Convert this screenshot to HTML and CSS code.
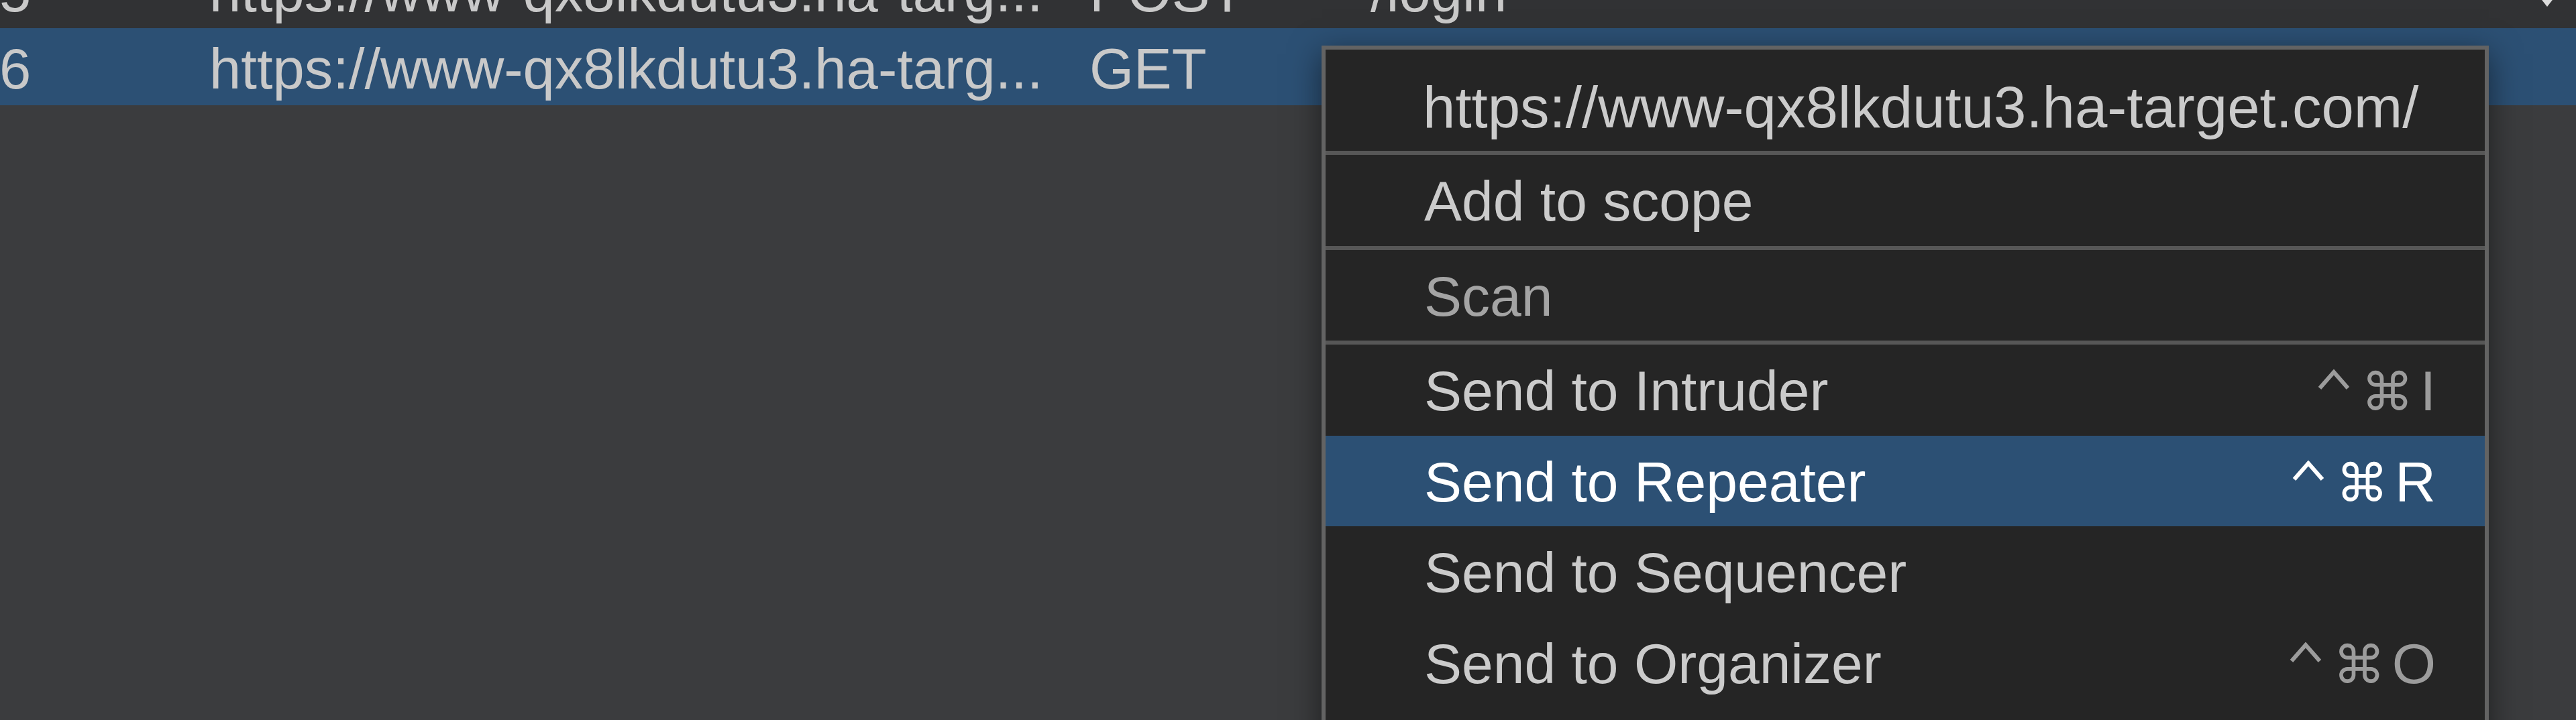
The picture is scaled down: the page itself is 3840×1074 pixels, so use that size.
FILE: index.html
```html
<!DOCTYPE html>
<html>
<head>
<meta charset="utf-8">
<link rel="stylesheet" href="styles.css">
</head>
<body>
<div class="screen">
  <div class="table">
    <div class="row">
      <span class="c-num">5</span>
      <span class="c-url">https://www-qx8lkdutu3.ha-targ...</span>
      <span class="c-method">POST</span>
      <span class="c-path">/login</span>
      <span class="c-sort"><span class="sort-arrow"></span></span>
    </div>
    <div class="row selected">
      <span class="c-num">6</span>
      <span class="c-url">https://www-qx8lkdutu3.ha-targ...</span>
      <span class="c-method">GET</span>
      <span class="c-path"></span>
      <span class="c-sort"></span>
    </div>
  </div>

  <div class="menu">
    <div class="item header">https://www-qx8lkdutu3.ha-target.com/</div>
    <div class="sep"></div>
    <div class="item">Add to scope</div>
    <div class="sep"></div>
    <div class="item disabled">Scan</div>
    <div class="sep"></div>
    <div class="item"><span>Send to Intruder</span><span class="shortcut"><svg class="k-ctrl" width="48" height="31" viewBox="0 0 48 31" aria-label="Control"><polyline points="3,28 24,4 45,28" fill="none" stroke="currentColor" stroke-width="6"/></svg><span class="k-cmd">⌘</span><span class="k-key">I</span></span></div>
    <div class="item active"><span>Send to Repeater</span><span class="shortcut"><svg class="k-ctrl" width="48" height="31" viewBox="0 0 48 31" aria-label="Control"><polyline points="3,28 24,4 45,28" fill="none" stroke="currentColor" stroke-width="6"/></svg><span class="k-cmd">⌘</span><span class="k-key">R</span></span></div>
    <div class="item"><span>Send to Sequencer</span></div>
    <div class="item"><span>Send to Organizer</span><span class="shortcut"><svg class="k-ctrl" width="48" height="31" viewBox="0 0 48 31" aria-label="Control"><polyline points="3,28 24,4 45,28" fill="none" stroke="currentColor" stroke-width="6"/></svg><span class="k-cmd">⌘</span><span class="k-key">O</span></span></div>
  </div>
</div>
</body>
</html>
```

FILE: styles.css
```css
html, body {
  margin: 0;
  padding: 0;
}
body {
  width: 3840px;
  height: 1074px;
  overflow: hidden;
  background: #3b3c3e;
  font-family: "Liberation Sans", Arial, sans-serif;
}
.screen {
  position: relative;
  display: flow-root;
  width: 3840px;
  height: 1074px;
}
.table {
  margin-top: -73px;
  font-size: 85px;
  color: #c9c9c9;
}
.row {
  display: grid;
  grid-template-columns: 313px 1312px 419px 1fr auto;
  height: 115px;
  box-sizing: border-box;
  padding-top: 6px;
  line-height: 109px;
  background: #313234;
  margin-left: -1px;
  white-space: nowrap;
}
.row.selected {
  background: #2c5074;
}
.c-sort {
  display: flex;
  align-items: flex-start;
  padding-right: 32px;
}
.sort-arrow {
  margin-top: 63px;
  width: 0;
  height: 0;
  border-left: 11px solid transparent;
  border-right: 11px solid transparent;
  border-top: 14px solid #dcdcdc;
}
.menu {
  position: absolute;
  left: 1970px;
  top: 68px;
  width: 1740px;
  box-sizing: border-box;
  border: 6px solid #636363;
  border-bottom: none;
  padding-bottom: 60px;
  background: #252525;
  box-shadow: 0 12px 44px rgba(0, 0, 0, 0.5);
  font-size: 84px;
  color: #cbcbcb;
}
.item {
  display: flex;
  justify-content: space-between;
  height: 135.5px;
  box-sizing: border-box;
  padding: 4px 73px 0 147px;
  line-height: 131.5px;
  white-space: nowrap;
}
.item.header {
  height: 151px;
  padding: 21px 73px 0 145px;
  line-height: 130px;
  font-size: 87px;
}
.item.disabled {
  color: #a4a4a4;
}
.item.active {
  background: #2c5074;
  color: #ffffff;
}
.sep {
  height: 6px;
  background: #575757;
}
.shortcut {
  display: block;
  color: #9c9c9c;
}
.active .shortcut {
  color: #ffffff;
}
.k-ctrl {
  display: inline-block;
  vertical-align: 30px;
  margin-right: 17px;
}
.k-cmd {
  font-family: "DejaVu Sans", sans-serif;
  font-size: 78px;
  margin-right: 10px;
}
```
